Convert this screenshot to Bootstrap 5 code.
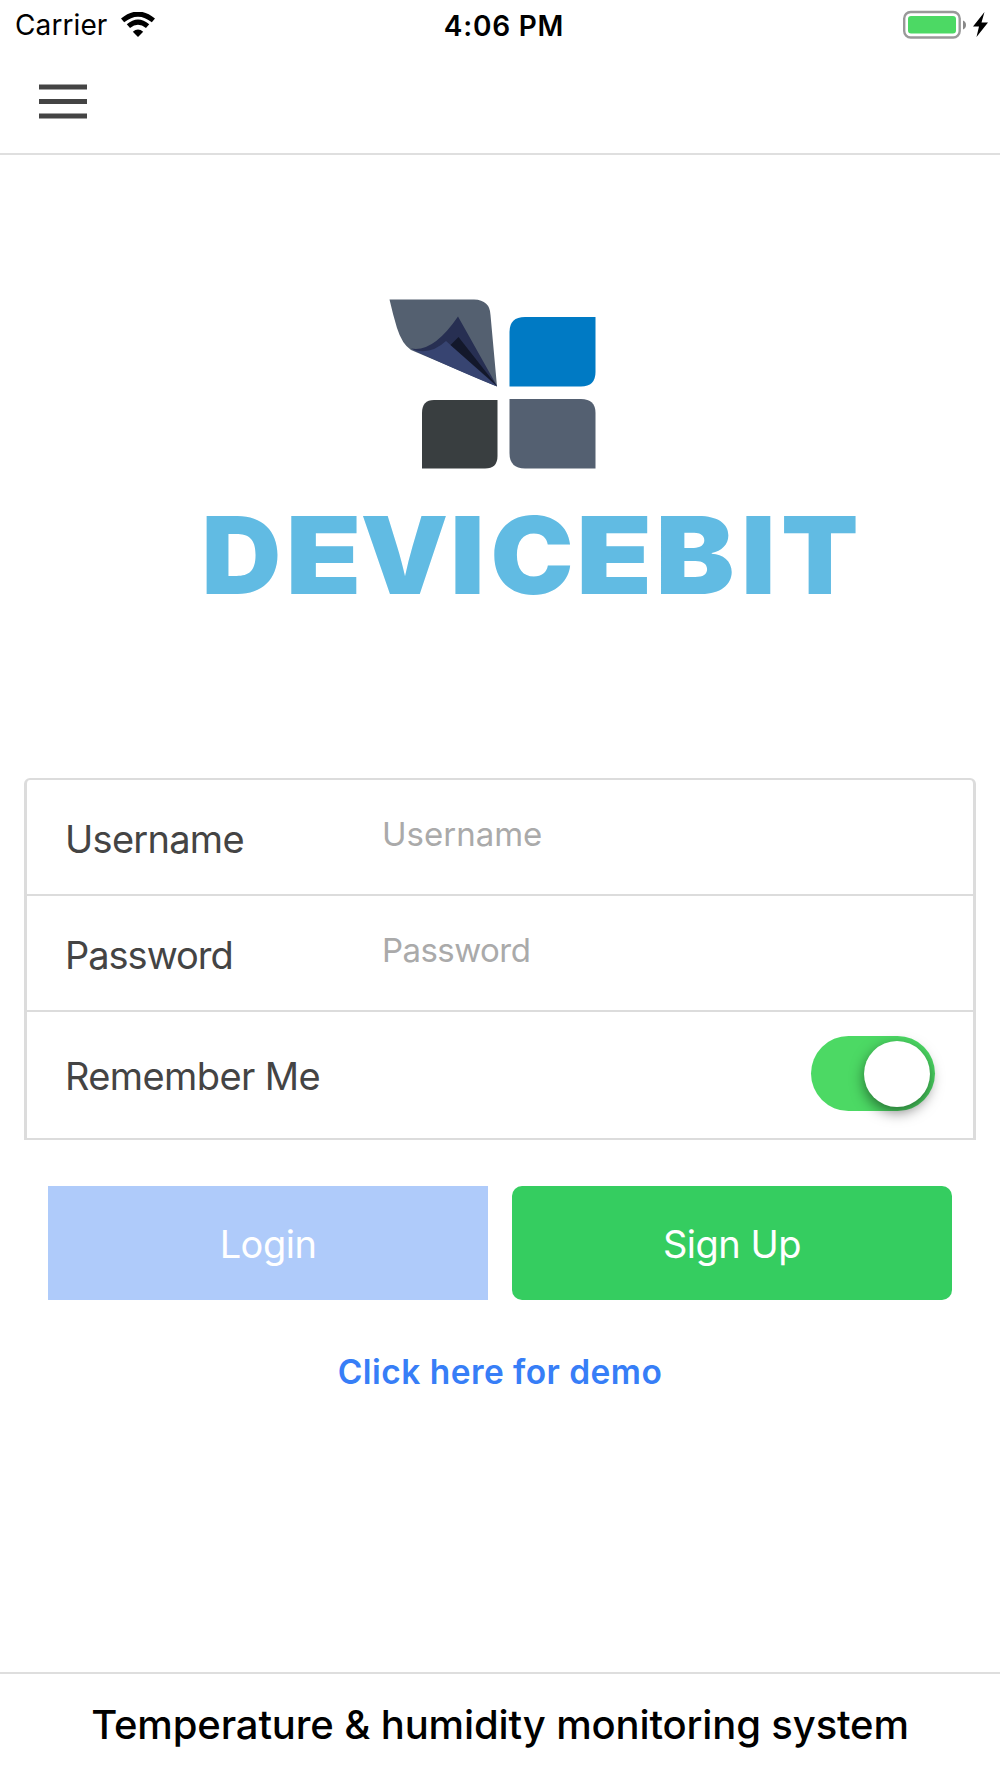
<!DOCTYPE html>
<html lang="en">
<head>
<meta charset="utf-8">
<meta name="viewport" content="width=device-width, initial-scale=1">
<title>DEVICEBIT</title>
<link href="https://cdn.jsdelivr.net/npm/bootstrap@5.3.0/dist/css/bootstrap.min.css" rel="stylesheet">
<style>
body{font-family:Inter,"Liberation Sans",sans-serif;color:#000;background:#fff}
.screen{width:1000px;height:1778px;overflow:hidden}
.status-bar{height:50px;padding:0 11px 0 15px}
.status-bar .side{flex:1 1 0}
.carrier{font-size:28px;line-height:50px;letter-spacing:.1px}
.clock{font-size:28px;font-weight:600;line-height:50px;letter-spacing:.8px;padding-left:4px;margin-top:1px}
.wifi{margin-left:13px}
.topbar{height:105px;padding:34px 39px 0;border-bottom:2px solid #dfdfdf}
.menu-btn{width:48px;height:35px}
.brand-area{height:623px}
.login-form{margin:0 24px;border:2px solid #dcdcdc;border-width:2px 3px;border-radius:6px 6px 0 0;height:362px}
.field-row{height:116px;padding-left:38px;border-bottom:2px solid #dcdcdc}
.field-row.last-row{height:126px;border-bottom:0;padding:24px 38px 0 38px}
.field-label{font-size:38px;line-height:46px;color:#444;width:317px;white-space:nowrap;margin-top:36px}
.field-label.user-label{letter-spacing:-.72px}
.field-label.pass-label{letter-spacing:-1.02px}
.last-row .field-label{letter-spacing:-.6px;margin-top:17px}
.field-input,.field-input:focus{font-size:33px;line-height:46px;height:46px;padding:0;border:0;box-shadow:none;background:transparent;color:#444;margin-top:31px;width:auto}
.pass-input::placeholder{letter-spacing:-.55px}
.field-input::placeholder{color:#aaa;opacity:1}
.ios-toggle.form-check-input{width:124px;height:75px;margin:0;border:0;border-radius:38px;background:#4cd964;position:relative;box-shadow:none}
.ios-toggle.form-check-input::after{content:"";position:absolute;width:66px;height:66px;right:5px;top:5px;border-radius:50%;background:#fff;box-shadow:0 5px 14px rgba(0,0,0,.5)}
.actions{margin:46px 48px 0;gap:24px}
.action-btn{flex:1 1 0;height:114px;border:0;font-size:38px;line-height:46px;padding:2px 0 0;color:#fff;border-radius:10px;letter-spacing:-.5px}
.btn-login,.btn-login:disabled{background:#afcbfa;border-radius:0;color:#fff;opacity:1}
.btn-signup{background:#35cd60}
.demo-link{font-size:33.5px;line-height:40px;font-weight:600;color:#377ef7;margin-top:52px;letter-spacing:.45px}
.foot{height:106px;border-top:2px solid #dedede;font-size:40px;font-weight:500;letter-spacing:-.14px}
.foot span{line-height:102px;white-space:nowrap}
</style>
</head>
<body>
<div class="screen d-flex flex-column">
  <header>
    <div class="status-bar d-flex align-items-center">
      <div class="side d-flex align-items-center">
        <span class="carrier">Carrier</span>
        <svg class="wifi" width="36" height="26" viewBox="0 0 36 26"><path d="M18 25 12.800 19.800Q18 15.400 23.200 19.800Z"/><path d="M8.400 14.200Q18 6 27.600 14.200M2.600 8.400Q18-4.200 33.400 8.400" fill="none" stroke="#000" stroke-width="5"/></svg>
      </div>
      <span class="clock">4:06 PM</span>
      <div class="side d-flex align-items-center justify-content-end">
        <svg width="86" height="30" viewBox="0 0 86 30"><rect x="1.200" y="2" width="55.500" height="25.500" rx="6.500" fill="#fff" stroke="#999" stroke-width="2.400"/><rect x="5" y="6" width="48" height="17.500" rx="3" fill="#4cd964"/><path d="M60 10.500q3 1.300 3 4.500t-3 4.500z" fill="#888"/><path d="M81.500 2 70 16.500h6L73.500 27 85 12.500h-6.500z"/></svg>
      </div>
    </div>
    <nav class="topbar">
      <button class="btn p-0 border-0 d-block menu-btn" aria-label="Menu"><svg class="d-block" width="48" height="35" viewBox="0 0 48 35" fill="#444"><path d="M0 .5h48v5H0zM0 15h48v5H0zM0 29.500h48v5H0z"/></svg></button>
    </nav>
  </header>
  <main class="flex-grow-1">
    <div class="brand-area">
      <svg class="d-block" width="1000" height="623" viewBox="0 155 1000 623">
        <path d="M389.500 299.500H474Q490 300 490.500 315L497 386.500 411 350Q402 344 397 328Q393 315 389.500 299.500Z" fill="#546070"/>
        <path d="M411 348.500Q433 353 458 316.500L497 386 420 353Z" fill="#272f52"/>
        <path d="M411 349Q430 356 446 341L497 386.500Q470 376 411 349Z" fill="#374471"/>
        <path d="M450.500 345 458.500 337 497 386Z" fill="#13182b"/>
        <path d="M509.500 386.500V332Q509.500 317 525 317H595.500V372Q595.500 386.500 581 386.500Z" fill="#007ac4"/>
        <path d="M422 468.500V413Q422 400 434 400H497.500V456Q497.500 468.500 485 468.500Z" fill="#393e40"/>
        <path d="M509.500 399H581Q595.500 399 595.500 413V468.500H525Q509.500 468.500 509.500 453Z" fill="#546071"/>
        <text y="594" font-family="Inter" font-weight="900" font-size="107.500" fill="#61bbe3"><tspan x="201.500" textLength="79.700" lengthAdjust="spacingAndGlyphs">D</tspan><tspan x="285.400" textLength="76.200" lengthAdjust="spacingAndGlyphs">E</tspan><tspan x="360.500" textLength="87.900" lengthAdjust="spacingAndGlyphs">V</tspan><tspan x="449.800" textLength="35.400" lengthAdjust="spacingAndGlyphs">I</tspan><tspan x="490.500" textLength="83.200" lengthAdjust="spacingAndGlyphs">C</tspan><tspan x="575.900" textLength="76.400" lengthAdjust="spacingAndGlyphs">E</tspan><tspan x="655.500" textLength="79" lengthAdjust="spacingAndGlyphs">B</tspan><tspan x="740.700" textLength="35.200" lengthAdjust="spacingAndGlyphs">I</tspan><tspan x="780.900" textLength="77.600" lengthAdjust="spacingAndGlyphs">T</tspan></text>
      </svg>
    </div>
    <form class="login-form" onsubmit="return false">
      <div class="field-row d-flex align-items-start"><label class="field-label user-label" for="user">Username</label><input id="user" class="form-control field-input flex-grow-1" placeholder="Username"></div>
      <div class="field-row d-flex align-items-start"><label class="field-label pass-label" for="pass">Password</label><input id="pass" type="password" class="form-control field-input pass-input flex-grow-1" placeholder="Password"></div>
      <div class="field-row last-row d-flex align-items-start justify-content-between form-switch"><label class="field-label" for="remember">Remember Me</label><input id="remember" class="form-check-input ios-toggle" type="checkbox" checked></div>
    </form>
    <div class="actions d-flex">
      <button class="btn action-btn btn-login" disabled>Login</button>
      <button class="btn action-btn btn-signup">Sign Up</button>
    </div>
    <div class="text-center demo-link">Click here for demo</div>
  </main>
  <footer class="foot text-center"><span>Temperature &amp; humidity monitoring system</span></footer>
</div>
<script src="https://cdn.jsdelivr.net/npm/bootstrap@5.3.0/dist/js/bootstrap.bundle.min.js"></script>
</body>
</html>
